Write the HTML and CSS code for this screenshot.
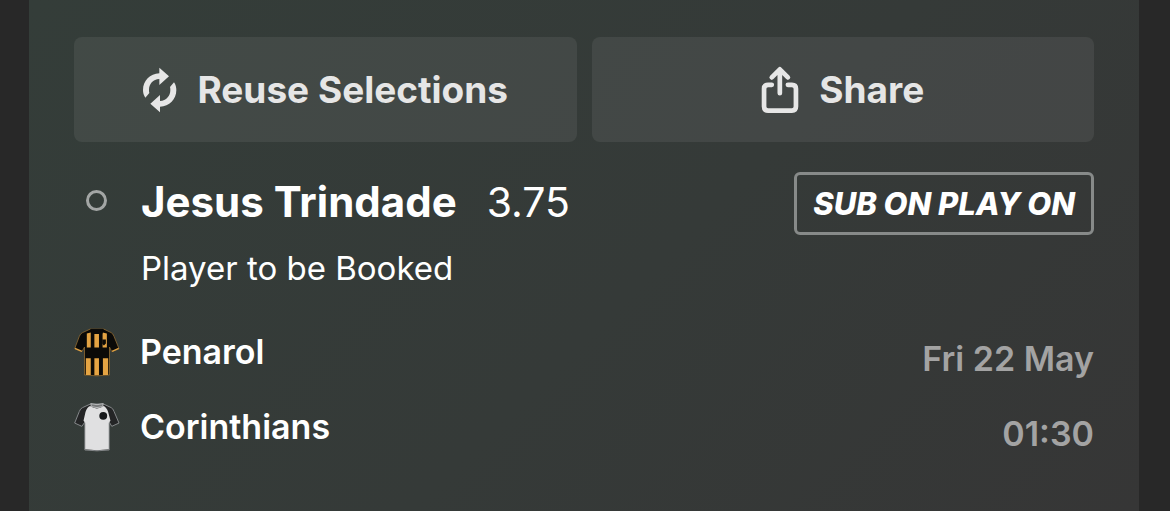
FILE: index.html
```html
<!DOCTYPE html>
<html lang="en">
  <head>
    <meta charset="utf-8">
    <meta name="viewport" content="width=device-width, initial-scale=1">
    <title>My Bets</title>
    <link rel="stylesheet" href="styles.css">
  </head>
  <body>

    <main class="bet-card">

      <!-- Actions -->
      <div class="actions">
        <button type="button" class="action-btn">
          <svg class="icon-reuse" viewBox="45 35 105 138" aria-hidden="true">
            <g id="reuse-half">
              <path d="M97 37 L126 63 L97 89 V71 C78 72 66 86 66 104 C66 107 66 110 67 113 L55 127 C50 120 48 112 48 104 C48 76 69 55 97 54 Z"/>
            </g>
            <use href="#reuse-half" transform="rotate(180 98 104)"/>
          </svg>
          <span>Reuse Selections</span>
        </button>
        <button type="button" class="action-btn">
          <svg class="icon-share" viewBox="70 48 113 143" aria-hidden="true">
            <path d="M102 104 H91 Q79 104 79 116 V169 Q79 181 91 181 H162 Q174 181 174 169 V116 Q174 104 162 104 H150"/>
            <path d="M126 129 V59 M102 82 L126 58 L150 82"/>
          </svg>
          <span>Share</span>
        </button>
      </div>

      <!-- Selection -->
      <section class="selection">
        <div class="selection-head">
          <span class="status"></span>
          <h1 class="player">Jesus Trindade</h1>
          <span class="odds">3.75</span>
          <span class="promo">SUB ON PLAY ON</span>
        </div>
        <p class="market">Player to be Booked</p>
      </section>

      <!-- Fixture -->
      <section class="fixture">
        <div class="teams">
          <div class="team">
            <svg class="shirt" viewBox="40 50 140 150" aria-hidden="true">
              <path fill="#0b0a08" stroke="#a87a35" stroke-width="2" d="M90 55 L66 66 Q59 69 56 78 L42 115 L64 124 L72 110 V195 Q110 200 148 195 V110 L155 124 L177 115 L162 78 Q159 69 153 66 L130 55 Z"/>
              <path fill="#e5a443" d="M79 69 L91 66 V111 H79 Z M102 70 H116 V111 H102 Z M127 66 L140 69 V111 H127 Z M76 144 H91 V195 H76 Z M102 144 H116 V196 H102 Z M128 144 H144 V195 H128 Z"/>
              <path fill="#0b0a08" d="M90 54 H130 L127 69 H93 Z M126 87 H137 V99 L131 105 L126 100 Z"/>
              <path fill="none" stroke="#dda044" stroke-width="4" d="M43 114 L64 123 M156 123 L176 114"/>
            </svg>
            <span>Penarol</span>
          </div>
          <div class="team">
            <svg class="shirt" viewBox="40 50 140 150" aria-hidden="true">
              <path fill="#242526" stroke="#85888a" stroke-width="3" d="M90 55 L66 66 Q59 69 56 78 L42 113 L64 123 L73 110 V195 Q110 200 147 195 V110 L155 123 L177 113 L162 78 Q159 69 153 66 L130 55 Z"/>
              <path fill="#e0e0e1" d="M89 61 Q80 64 75 79 L69 106 L74 112 V193 Q110 198 146 193 V112 L151 106 L144 79 Q139 65 130 61 Q110 76 89 61 Z"/>
              <path fill="#77797a" stroke="#bcbebf" stroke-width="3" d="M91 54 Q110 60 129 54 L127 63 Q110 69 93 63 Z"/>
              <circle fill="#17191b" cx="129" cy="91" r="12"/>
            </svg>
            <span>Corinthians</span>
          </div>
        </div>
        <div class="kickoff">
          <span>Fri 22 May</span>
          <span>01:30</span>
        </div>
      </section>

    </main>

  </body>
</html>
```
FILE: styles.css
```css
* { box-sizing: border-box; }

body {
  margin: 0;
  padding: 0 31px 0 29px;
  background: #282828;
  color: #fff;
  font-family: Inter, "Liberation Sans", sans-serif;
}

.bet-card {
  min-height: 100vh;
  padding: 37px 45px;
  background: linear-gradient(135deg, #343d39 0%, #353a38 55%, #363636 100%);
}

/* Actions */
.actions {
  display: flex;
  gap: 15px;
}

.action-btn {
  flex: 1;
  display: flex;
  align-items: center;
  justify-content: center;
  gap: 20px;
  height: 105px;
  padding: 0;
  border: 0;
  border-radius: 8px;
  background: rgba(255, 255, 255, 0.07);
  color: #e6e6e6;
  font: 700 37px/44px Inter, "Liberation Sans", sans-serif;
  cursor: pointer;
}

.icon-reuse {
  width: 35px;
  height: 46px;
  fill: currentColor;
}

.icon-share {
  width: 38px;
  height: 48px;
  fill: none;
  stroke: currentColor;
  stroke-width: 14;
  stroke-linecap: round;
  stroke-linejoin: round;
}

/* Selection */
.selection {
  margin-top: 30px;
}

.selection-head {
  display: flex;
  align-items: center;
}

.status {
  width: 21px;
  height: 21px;
  margin: 0 34px 6px 12px;
  border: 3px solid #a3a6a5;
  border-radius: 50%;
}

.player {
  margin: 0 0 4px;
  font-size: 42px;
  line-height: 50px;
  font-weight: 700;
}

.odds {
  margin: 0 0 4px 30px;
  font-size: 41px;
  line-height: 50px;
  font-weight: 400;
}

.promo {
  margin-left: auto;
  padding: 0 16px;
  border: 3px solid #878a89;
  border-radius: 6px;
  font-size: 31px;
  line-height: 57px;
  font-weight: 800;
  font-style: italic;
  white-space: nowrap;
}

.market {
  margin: 11px 0 0 67px;
  font-size: 33px;
  line-height: 44px;
}

/* Fixture */
.fixture {
  display: flex;
  justify-content: space-between;
  margin-top: 37px;
  font-size: 34px;
  line-height: 50px;
}

.teams,
.kickoff {
  display: flex;
  flex-direction: column;
  gap: 25px;
}

.team {
  display: flex;
  align-items: center;
  gap: 20px;
  font-weight: 600;
}

.shirt {
  width: 46px;
  height: 50px;
}

.kickoff {
  padding-top: 7px;
  align-items: flex-end;
  color: #a3a3a3;
  font-weight: 600;
}
```
